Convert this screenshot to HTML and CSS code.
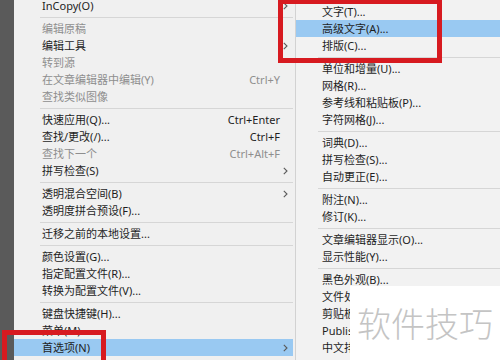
FILE: index.html
```html
<!DOCTYPE html>
<html lang="zh-CN">
<head>
<meta charset="utf-8">
<title>首选项菜单</title>
<link rel="stylesheet" href="styles.css">
</head>
<body>
<div class="screen">
  <div class="strip"></div>
  <div class="menu-main">
    <div class="item"><span>InCopy(O)</span><span></span><svg class="arrow" viewBox="0 0 5 8"><polyline points="0.8,0.8 4,4 0.8,7.2"/></svg></div>
    <div class="sep"></div>
    <div class="item dis"><span>编辑原稿</span></div>
    <div class="item"><span>编辑工具</span><span></span><svg class="arrow" viewBox="0 0 5 8"><polyline points="0.8,0.8 4,4 0.8,7.2"/></svg></div>
    <div class="item dis"><span>转到源</span></div>
    <div class="item dis"><span>在文章编辑器中编辑(Y)</span><span class="key">Ctrl+Y</span></div>
    <div class="item dis"><span>查找类似图像</span></div>
    <div class="sep"></div>
    <div class="item"><span>快速应用(Q)...</span><span class="key">Ctrl+Enter</span></div>
    <div class="item"><span>查找/更改(/)...</span><span class="key">Ctrl+F</span></div>
    <div class="item dis"><span>查找下一个</span><span class="key">Ctrl+Alt+F</span></div>
    <div class="item"><span>拼写检查(S)</span><span></span><svg class="arrow" viewBox="0 0 5 8"><polyline points="0.8,0.8 4,4 0.8,7.2"/></svg></div>
    <div class="sep"></div>
    <div class="item"><span>透明混合空间(B)</span><span></span><svg class="arrow" viewBox="0 0 5 8"><polyline points="0.8,0.8 4,4 0.8,7.2"/></svg></div>
    <div class="item"><span>透明度拼合预设(F)...</span></div>
    <div class="sep"></div>
    <div class="item"><span>迁移之前的本地设置...</span></div>
    <div class="sep"></div>
    <div class="item"><span>颜色设置(G)...</span></div>
    <div class="item"><span>指定配置文件(R)...</span></div>
    <div class="item"><span>转换为配置文件(V)...</span></div>
    <div class="sep"></div>
    <div class="item"><span>键盘快捷键(H)...</span></div>
    <div class="item"><span>菜单(M)...</span></div>
    <div class="item hl"><span>首选项(N)</span><span></span><svg class="arrow" viewBox="0 0 5 8"><polyline points="0.8,0.8 4,4 0.8,7.2"/></svg></div>
  </div>
  <div class="menu-sub">
    <div class="item"><span>文字(T)...</span></div>
    <div class="item hl"><span>高级文字(A)...</span></div>
    <div class="item"><span>排版(C)...</span></div>
    <div class="sep"></div>
    <div class="item"><span>单位和增量(U)...</span></div>
    <div class="item"><span>网格(R)...</span></div>
    <div class="item"><span>参考线和粘贴板(P)...</span></div>
    <div class="item"><span>字符网格(J)...</span></div>
    <div class="sep"></div>
    <div class="item"><span>词典(D)...</span></div>
    <div class="item"><span>拼写检查(S)...</span></div>
    <div class="item"><span>自动更正(E)...</span></div>
    <div class="sep"></div>
    <div class="item"><span>附注(N)...</span></div>
    <div class="item"><span>修订(K)...</span></div>
    <div class="sep"></div>
    <div class="item"><span>文章编辑器显示(O)...</span></div>
    <div class="item"><span>显示性能(Y)...</span></div>
    <div class="sep"></div>
    <div class="item"><span>黑色外观(B)...</span></div>
    <div class="item"><span>文件处理(F)...</span></div>
    <div class="item"><span>剪贴板处理(H)...</span></div>
    <div class="item"><span>Publish Online...</span></div>
    <div class="item"><span>中文排版(Z)...</span></div>
  </div>
</div>
<div class="mark mark-sub"></div>
<div class="mark mark-pref"></div>
<div class="watermark">软件技巧</div>
</body>
</html>
```

FILE: styles.css
```css
html, body {
  margin: 0;
  padding: 0;
}
body {
  width: 500px;
  height: 360px;
  overflow: hidden;
  position: relative;
  background: #f0f0f0;
  font-family: "Noto Sans", "Noto Sans CJK SC", sans-serif;
  font-size: 11px;
  color: #1e1e1e;
}
.screen {
  display: flex;
  height: 360px;
  overflow: hidden;
}
.strip {
  flex: none;
  width: 14px;
  background: #5a5a5a;
}
.menu-main {
  flex: none;
  width: 281px;
  box-sizing: border-box;
  padding-right: 2px;
  margin-top: -3px;
  background: #f0f0f0;
}
.item {
  display: grid;
  grid-template-columns: 1fr auto 13px;
  align-items: center;
  height: 17px;
  line-height: 17px;
  padding-left: 28px;
  white-space: nowrap;
}
.key {
  text-align: right;
}
.dis {
  color: #8e8e8e;
}
.hl {
  background: #99c9f2;
}
.arrow {
  width: 5px;
  height: 8px;
  margin-left: 3px;
  fill: none;
  stroke: #5a5a5a;
  stroke-width: 1.1;
}
.sep {
  display: flex;
  align-items: center;
  height: 6px;
  margin-left: 26px;
}
.sep::before {
  content: "";
  flex: 1;
  height: 1px;
  background: #d6d6d6;
}
.menu-sub {
  flex: 1;
  border-left: 1px solid #d2d2d2;
  padding-top: 3px;
  background: #f2f2f2;
}
.menu-sub .item {
  grid-template-columns: 1fr;
  padding-left: 26px;
}
.menu-sub .sep {
  margin-left: 22px;
}
.mark {
  position: absolute;
  box-sizing: border-box;
  border: 5px solid #d71a20;
}
.mark-sub {
  left: 278px;
  top: -1px;
  width: 164px;
  height: 64px;
}
.mark-pref {
  left: 2px;
  top: 330px;
  width: 104px;
  height: 40px;
}
.watermark {
  position: absolute;
  left: 350px;
  top: 286px;
  right: 0;
  bottom: 0;
  background: #ffffff;
  color: #c4c4c4;
  font-family: "Noto Sans CJK SC", sans-serif;
  font-weight: 300;
  font-size: 34px;
  line-height: 40px;
  padding: 17px 0 0 7px;
  white-space: nowrap;
}
```
